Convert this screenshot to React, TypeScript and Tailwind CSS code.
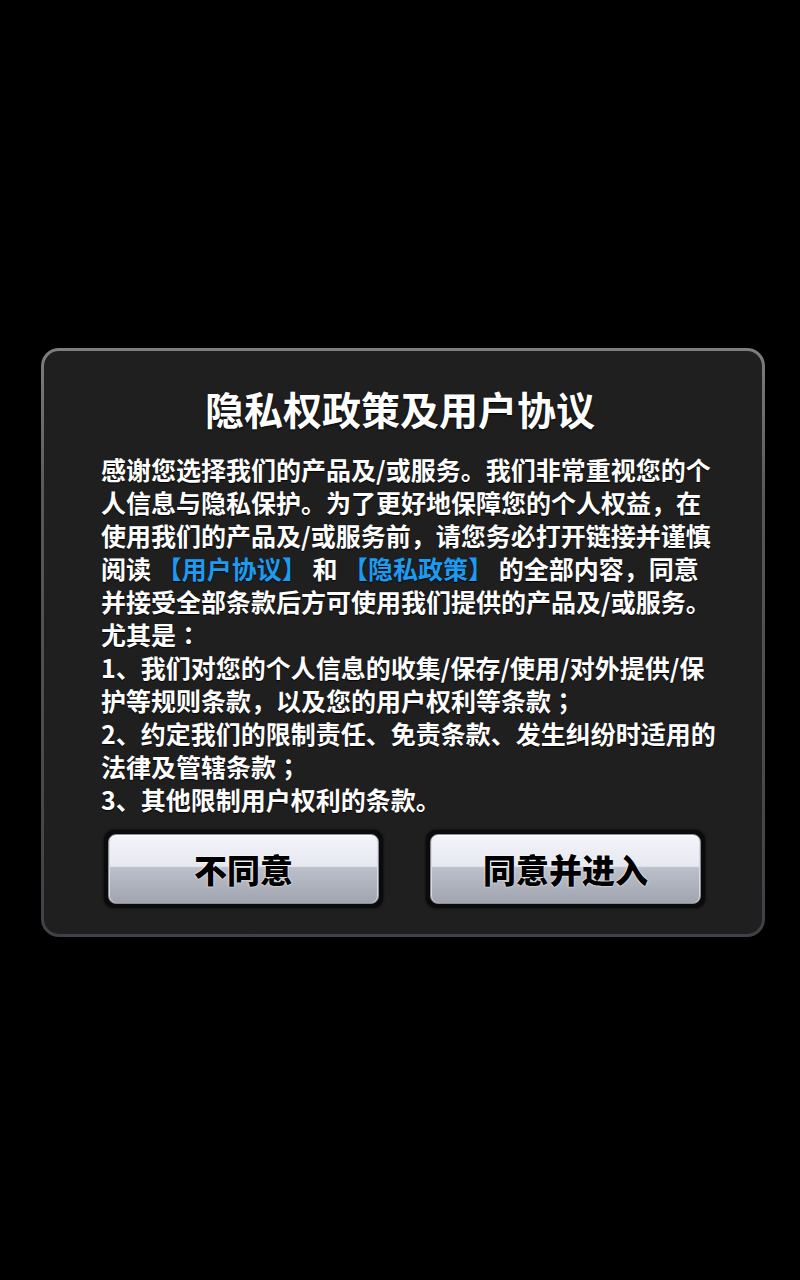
const FONT = '"Noto Sans CJK SC", "Noto Sans", sans-serif'

type Seg = { text: string; link?: boolean; punct?: boolean }
type Line = Seg[]

const LINES: Line[] = [
  [{ text: '感谢您选择我们的产品及/或服务。我们非常重视您的个' }],
  [{ text: '人信息与隐私保护。为了更好地保障您的个人权益，在' }],
  [{ text: '使用我们的产品及/或服务前，请您务必打开链接并谨慎' }],
  [
    { text: '阅读 ' },
    { text: '【用户协议】', link: true },
    { text: ' 和 ' },
    { text: '【隐私政策】', link: true },
    { text: ' 的全部内容，同意' },
  ],
  [{ text: '并接受全部条款后方可使用我们提供的产品及/或服务。' }],
  [{ text: '尤其是' }, { text: '：', punct: true }],
  [{ text: '1、我们对您的个人信息的收集/保存/使用/对外提供/保' }],
  [{ text: '护等规则条款，以及您的用户权利等条款' }, { text: '；', punct: true }],
  [{ text: '2、约定我们的限制责任、免责条款、发生纠纷时适用的' }],
  [{ text: '法律及管辖条款' }, { text: '；', punct: true }],
  [{ text: '3、其他限制用户权利的条款。' }],
]

function GlossButton({ label }: { label: string }) {
  return (
    <div className="w-[279px] h-[78px] rounded-[10px] bg-[#0b0b0b] p-[4px] shadow-[0_0_3px_rgba(0,0,0,0.9)]">
      <div className="h-full w-full rounded-[8px] border border-[#8a8e98] overflow-hidden flex items-center justify-center bg-[linear-gradient(to_bottom,#f4f5fa_0%,#e6e8f0_46%,#bcc0ca_48%,#a0a4b0_100%)] shadow-[inset_0_1px_0_#ffffff,inset_1px_0_0_#d8dbe3,inset_-1px_0_0_#d8dbe3]">
        <span
          className="text-[33px] font-black text-black leading-none [text-shadow:0_0_2px_#ffffff,0_0_1px_#ffffff]"
          style={{ fontFamily: FONT }}
        >
          {label}
        </span>
      </div>
    </div>
  )
}

export default function App() {
  return (
    <div
      className="w-[800px] h-[1280px] bg-black overflow-hidden [text-spacing-trim:space-all]"
      style={{ fontFamily: FONT }}
    >
      <div className="ml-[41px] mt-[348px] w-[724px] rounded-[18px] p-[3px] bg-[linear-gradient(to_bottom,#7e7e7e_0%,#585858_25%,#3e4246_100%)]">
        <div className="rounded-[15px] bg-[#1f1f1f] pt-[29px] pb-[26px]">
          <h1 className="pr-[6px] text-center text-white font-bold text-[39px] leading-[56px] [text-shadow:0_1px_2px_rgba(0,0,0,0.9)]">
            隐私权政策及用户协议
          </h1>

          <div className="mt-[17px] pl-[57px] text-white font-bold text-[25px] leading-[33px] [text-shadow:0_1px_1px_rgba(0,0,0,0.9)]">
            {LINES.map((line, i) => (
              <div key={i} className="whitespace-pre">
                {line.map((seg, j) => {
                  if (seg.link)
                    return (
                      <span key={j} className="text-[#1d9bf0]">
                        {seg.text}
                      </span>
                    )
                  if (seg.punct)
                    return (
                      <span
                        key={j}
                        className="inline-block w-[1em] text-center"
                        style={{ fontFamily: '"Noto Sans CJK TC", "Noto Sans CJK SC", sans-serif' }}
                      >
                        {seg.text}
                      </span>
                    )
                  return <span key={j}>{seg.text}</span>
                })}
              </div>
            ))}
          </div>

          <div className="mt-[14px] flex justify-between pl-[60px] pr-[57px]">
            <GlossButton label="不同意" />
            <GlossButton label="同意并进入" />
          </div>
        </div>
      </div>
    </div>
  )
}
